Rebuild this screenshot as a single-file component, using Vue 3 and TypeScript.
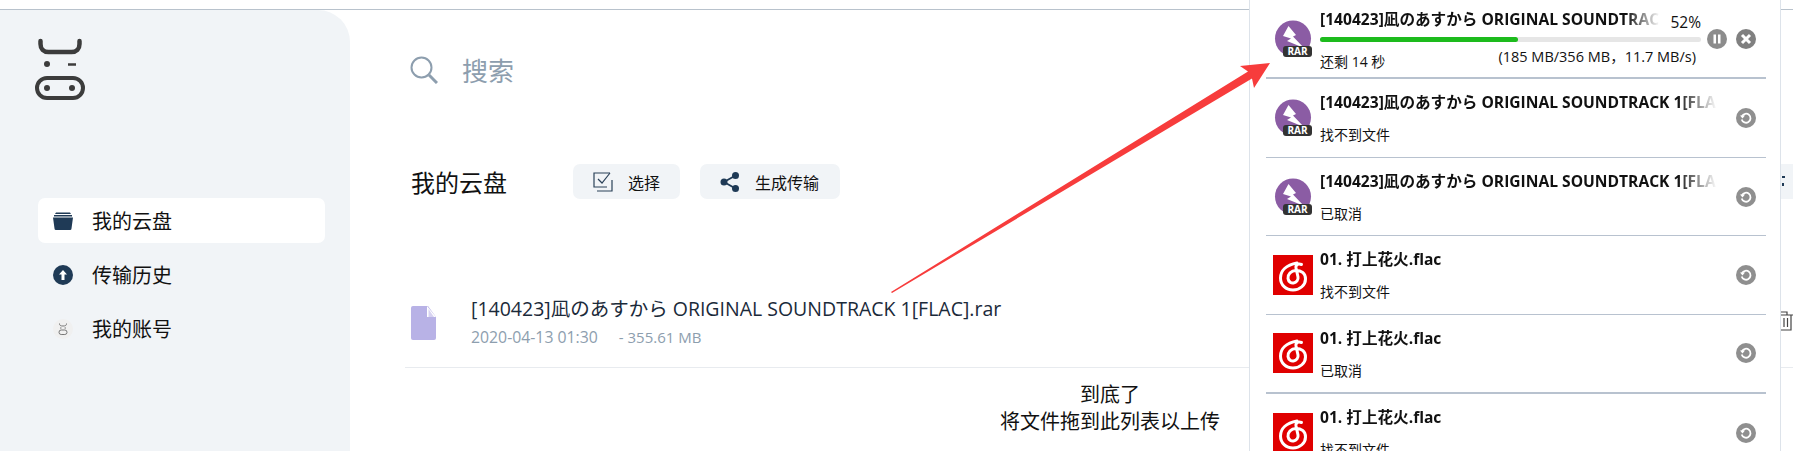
<script setup lang="ts">
const longName = '[140423]凪のあすから ORIGINAL SOUNDTRACK 1[FLAC].rar'
const flacName = '01. 打上花火.flac'

const navItems = [
  { label: '我的云盘', icon: 'drive', active: true },
  { label: '传输历史', icon: 'history', active: false },
  { label: '我的账号', icon: 'account', active: false }
]

const transfers = [
  { name: longName, kind: 'rar', status: '找不到文件' },
  { name: longName, kind: 'rar', status: '已取消' },
  { name: flacName, kind: 'flac', status: '找不到文件' },
  { name: flacName, kind: 'flac', status: '已取消', thick: true },
  { name: flacName, kind: 'flac', status: '找不到文件' }
]
</script>

<template>
  <div class="page">
    <div class="topline"></div>
    <div class="layout">
      <aside class="sidebar">
        <svg class="logo" viewBox="30 35 60 70" fill="none" stroke="#3c3c3c">
          <path d="M40.5 41v3c0 5 3 8 8 8h23c5 0 8-3 8-8v-3" stroke-width="4.5" stroke-linecap="round" />
          <circle cx="47" cy="64" r="3" fill="#3c3c3c" stroke="none" />
          <path d="M68 64.500h8" stroke-width="2.500" />
          <rect x="37" y="78" width="46" height="20" rx="10" stroke-width="4" />
          <circle cx="47" cy="88" r="3" fill="#3c3c3c" stroke="none" />
          <circle cx="72" cy="88" r="3" fill="#3c3c3c" stroke="none" />
        </svg>
        <nav class="nav">
          <div v-for="item in navItems" :key="item.label" class="nav-item" :class="{ active: item.active }">
            <svg v-if="item.icon === 'drive'" class="nav-icon" viewBox="0 0 20 20">
              <path d="M3 1.500h14l1 1.500H2z" fill="#1f3a56" />
              <path d="M1 4h18v1.500H1z" fill="#1f3a56" />
              <path d="M0 6.500h20l-1.500 11a1.500 1.500 0 0 1-1.500 1.500H3a1.500 1.500 0 0 1-1.500-1.500z" fill="#1f3a56" />
            </svg>
            <svg v-else-if="item.icon === 'history'" class="nav-icon" viewBox="0 0 20 20">
              <circle cx="10" cy="10" r="10" fill="#1f3a56" />
              <path d="M10 5l4 4.500h-2.500V15h-3V9.500H6z" fill="#fff" />
            </svg>
            <svg v-else class="nav-icon" viewBox="0 0 20 20" fill="none" stroke="#777">
              <circle cx="10" cy="10" r="10" fill="#f0f0f0" stroke="none" />
              <path d="M6.500 4.500c0 2 1 2.500 3.500 2.500s3.500-.5 3.500-2.500" stroke-width="1" />
              <rect x="6" y="11" width="8" height="4.500" rx="2.200" stroke-width="1" />
              <path d="M7 9h1.500M11.500 9H13" stroke-width="1" />
            </svg>
            <span>{{ item.label }}</span>
          </div>
        </nav>
      </aside>

      <main class="content">
        <div class="search">
          <svg class="search-icon" viewBox="0 0 28 28" fill="none" stroke="#8d9eae">
            <circle cx="11.500" cy="11.500" r="10" stroke-width="2" />
            <path d="M19 19l8 8" stroke-width="3" />
          </svg>
          <span>搜索</span>
        </div>

        <div class="toolbar">
          <h1>我的云盘</h1>
          <button class="tool select">
            <svg viewBox="0 0 20 20" fill="none" stroke="#2a4158" stroke-width="1.200">
              <path d="M17 1H1v14h13" />
              <path d="M5 7l4 4 8-10" />
              <path d="M19 8v11H4" />
            </svg>
            选择
          </button>
          <button class="tool">
            <svg viewBox="0 0 20 20" fill="#1f3a56" stroke="#1f3a56">
              <circle cx="4" cy="10" r="3.500" stroke="none" />
              <circle cx="15.500" cy="3.500" r="3.500" stroke="none" />
              <circle cx="15.500" cy="16.500" r="3.500" stroke="none" />
              <path d="M15.500 3.500L4 10l11.500 6.500" fill="none" stroke-width="1.800" />
            </svg>
            生成传输
          </button>
          <button class="tool edge">
            <svg viewBox="0 0 4 12" fill="#1f3a56">
              <rect x="0" y="0" width="3" height="2" />
              <rect x="0" y="7" width="2" height="3" />
            </svg>
          </button>
        </div>

        <div class="file-row">
          <svg class="file-icon" viewBox="0 0 25 34">
            <path d="M2 0h15l8 11v21a2 2 0 0 1-2 2H2a2 2 0 0 1-2-2V2a2 2 0 0 1 2-2z" fill="#b8b2e6" />
            <path d="M16 0l9 11h-9z" fill="#fff" />
            <path d="M17.500 3l5.500 8h-5.500z" fill="#d7d3f1" />
          </svg>
          <div class="file-text">
            <div class="file-name">{{ longName }}</div>
            <div class="file-meta"><span>2020-04-13 01:30</span><span class="file-size">- 355.61 MB</span></div>
          </div>
          <svg class="trash" viewBox="0 0 22 20" fill="none" stroke="#444" stroke-width="1.200">
            <path d="M0 4h22M7 4V1h9v3M3 4v15h17V4M9 7v9M13 7v9M16.500 7v9" />
          </svg>
        </div>

        <div class="end-note">
          <div>到底了</div>
          <div>将文件拖到此列表以上传</div>
        </div>
      </main>
    </div>

    <section class="panel">
      <div class="row first">
        <svg class="thumb" viewBox="0 0 40 40">
          <circle cx="20" cy="19.500" r="18" fill="#8b5ca4" />
          <path d="M15.500 7l7.500 9-3 1.500L31 29l-17-7 4-2.500-8-2.500z" fill="#fff" />
          <rect x="10" y="27" width="29" height="11" rx="3" fill="#333" />
          <text x="24.500" y="36" class="rar-text">RAR</text>
        </svg>
        <div class="info">
          <div class="title short">{{ longName }}</div>
          <div class="pct">52%</div>
          <div class="bar"><div class="fill" :style="{ width: '52%' }"></div></div>
          <div class="foot">
            <span class="sub">还剩 14 秒</span>
            <span class="stats">(185 MB/356 MB，11.7 MB/s)</span>
          </div>
        </div>
        <div class="actions">
          <svg class="act" viewBox="0 0 20 20">
            <circle cx="10" cy="10" r="10" fill="#8c8c8c" />
            <path d="M6.500 5.500h2.500v9H6.500zM11 5.500h2.500v9H11z" fill="#fff" />
          </svg>
          <svg class="act" viewBox="0 0 20 20">
            <circle cx="10" cy="10" r="10" fill="#808080" />
            <path d="M6 6l8 8M14 6l-8 8" stroke="#fff" stroke-width="3" />
          </svg>
        </div>
      </div>

      <div v-for="(t, i) in transfers" :key="i" class="row" :class="{ thick: t.thick }">
        <svg v-if="t.kind === 'rar'" class="thumb" viewBox="0 0 40 40">
          <circle cx="20" cy="19.500" r="18" fill="#8b5ca4" />
          <path d="M15.500 7l7.500 9-3 1.500L31 29l-17-7 4-2.500-8-2.500z" fill="#fff" />
          <rect x="10" y="27" width="29" height="11" rx="3" fill="#333" />
          <text x="24.500" y="36" class="rar-text">RAR</text>
        </svg>
        <svg v-else class="thumb" viewBox="0 0 40 40">
          <rect width="40" height="40" fill="#e00000" />
          <path d="M24 8c-11 2-16.500 8-16.500 15S13 35 20 35s12.500-5 12.500-11-4.500-8.500-9.500-8.500-8.500 4-8 8c.5 3.500 3.500 5 5.500 4.500 3-.5 5-3 4.500-6L23 13c-.5-3 2-5 5.500-3.500" fill="none" stroke="#fff" stroke-width="3" stroke-linecap="round" />
        </svg>
        <div class="info">
          <div class="title">{{ t.name }}</div>
          <div class="sub status">{{ t.status }}</div>
        </div>
        <svg class="act" viewBox="0 0 20 20">
          <circle cx="10" cy="10" r="10" fill="#8f8f8f" />
          <path d="M6 8.200a4.500 4.500 0 1 1-.3 3.300" fill="none" stroke="#fff" stroke-width="1.800" />
          <path d="M4 7.500h5L6.500 10.500z" fill="#fff" />
        </svg>
      </div>
    </section>

    <svg class="arrow" viewBox="0 0 1793 451">
      <polygon points="891,292 1248,71.600 1240,66 1270,63 1254,88 1252,78.400 892,293" fill="#f73c3c" />
    </svg>
  </div>
</template>

<style>
html, body {
  margin: 0;
  background: #fff;
}
</style>

<style scoped>
.page {
  position: relative;
  width: 1793px;
  height: 451px;
  overflow: hidden;
  background: #fff;
  color: #111;
  font-family: "Open Sans", "Noto Sans CJK SC", sans-serif;
}

.topline {
  height: 9px;
  border-bottom: 1px solid #b8c2cc;
}

.layout {
  display: flex;
  height: 441px;
}

.sidebar {
  width: 350px;
  flex-shrink: 0;
  box-sizing: border-box;
  padding: 25px 25px 0 38px;
  background: #f1f4f7;
  border-top-right-radius: 32px;
}

.logo {
  display: block;
  width: 60px;
  height: 70px;
  margin-left: -8px;
}

.nav {
  display: flex;
  flex-direction: column;
  gap: 9px;
  margin-top: 93px;
}

.nav-item {
  display: flex;
  align-items: center;
  gap: 19px;
  height: 45px;
  padding-left: 15px;
  border-radius: 7px;
  font-size: 20px;
}

.nav-item.active {
  background: #fff;
}

.nav-icon {
  width: 20px;
  height: 20px;
}

.content {
  flex: 1;
  min-width: 0;
  padding-left: 55px;
}

.search {
  display: flex;
  align-items: center;
  gap: 24px;
  height: 40px;
  margin-top: 40px;
  padding-left: 5px;
  color: #8d9eae;
  font-size: 26px;
}

.search-icon {
  width: 28px;
  height: 28px;
}

.toolbar {
  display: flex;
  align-items: center;
  gap: 20px;
  height: 35px;
  margin-top: 74px;
  padding-left: 6px;
}

.toolbar h1 {
  margin: 0 46px 0 0;
  font-size: 24px;
  font-weight: 400;
}

.tool {
  display: flex;
  align-items: center;
  gap: 15px;
  height: 35px;
  padding: 0 20px;
  border: none;
  border-radius: 7px;
  background: #f1f4f7;
  color: #111;
  font-family: inherit;
  font-size: 16px;
}

.tool svg {
  width: 20px;
  height: 20px;
}

.tool:nth-of-type(2) {
  padding-right: 21px;
}

.tool.edge {
  width: 40px;
  margin-left: auto;
  padding: 0 0 0 29px;
  border-radius: 7px 0 0 7px;
}

.tool.edge svg {
  width: 4px;
  height: 12px;
}

.file-row {
  display: flex;
  align-items: center;
  gap: 35px;
  height: 81px;
  margin-top: 88px;
  padding-left: 6px;
  box-sizing: border-box;
  border-bottom: 1px solid #e8ebef;
}

.file-icon {
  width: 25px;
  height: 34px;
  flex-shrink: 0;
  margin-bottom: 9px;
}

.file-text {
  flex: 1;
  display: flex;
  flex-direction: column;
  gap: 6px;
  padding-bottom: 10px;
}

.file-name {
  font-size: 19.500px;
  line-height: 24px;
  color: #1b2a3a;
}

.file-meta {
  display: flex;
  gap: 21px;
  font-size: 15.800px;
  line-height: 20px;
  color: #8d9eae;
}

.file-size {
  font-size: 15px;
}

.trash {
  width: 22px;
  height: 20px;
  margin-bottom: 12px;
}

.end-note {
  margin-top: 13px;
  padding-left: 22px;
  text-align: center;
  font-size: 20px;
  line-height: 27px;
}

.panel {
  position: absolute;
  top: 0;
  right: 12px;
  width: 532px;
  height: 451px;
  box-sizing: border-box;
  padding-left: 16px;
  background: #fff;
  border-left: 1px solid #dde3ea;
  border-right: 1px solid #dde3ea;
}

.row {
  display: flex;
  align-items: center;
  gap: 7px;
  width: 500px;
  height: 78.7px;
  box-sizing: border-box;
  padding: 0 10px 0 7px;
  border-bottom: 1px solid #b8c2cf;
}

.row.first,
.row.thick {
  border-bottom-width: 2px;
}

.row.first {
  height: 79px;
}

.thumb {
  width: 40px;
  height: 40px;
  flex-shrink: 0;
}

.rar-text {
  fill: #fff;
  font-size: 10px;
  font-weight: 700;
  text-anchor: middle;
}

.info {
  position: relative;
  flex: 1;
  min-width: 0;
  align-self: flex-start;
  padding-top: 12px;
}

.row.first .info {
  padding-top: 8px;
}

.title {
  width: 397px;
  height: 22px;
  overflow: hidden;
  white-space: nowrap;
  font-size: 15.600px;
  font-weight: 700;
  line-height: 22px;
  -webkit-mask-image: linear-gradient(to right, #000 90%, transparent);
  mask-image: linear-gradient(to right, #000 90%, transparent);
}

.title.short {
  width: 340px;
}

.pct {
  position: absolute;
  top: 11px;
  right: 0;
  font-size: 15.500px;
  line-height: 22px;
}

.bar {
  height: 5px;
  margin-top: 7px;
  border-radius: 3px;
  background: #e6e6e6;
}

.fill {
  height: 100%;
  border-radius: 3px;
  background: #1dbb1d;
}

.foot {
  display: flex;
  justify-content: space-between;
  align-items: flex-start;
  padding-right: 5px;
}

.sub {
  font-size: 14px;
  line-height: 20px;
}

.foot .sub {
  margin-top: 10px;
}

.status {
  margin-top: 12px;
}

.stats {
  margin-top: 5px;
  font-size: 14.500px;
  line-height: 20px;
}

.actions {
  display: flex;
  gap: 9px;
  margin-left: -1px;
}

.act {
  width: 20px;
  height: 20px;
  flex-shrink: 0;
}

.arrow {
  position: absolute;
  inset: 0;
  width: 1793px;
  height: 451px;
  pointer-events: none;
}
</style>
